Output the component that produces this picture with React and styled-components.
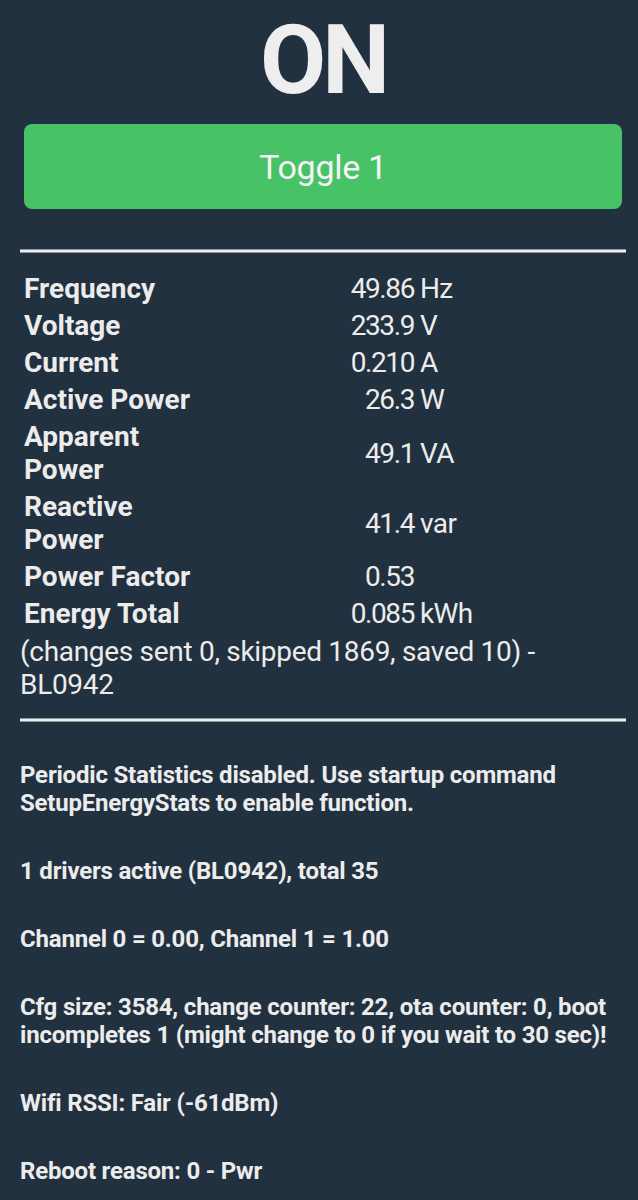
import React from "react";
import styled, { createGlobalStyle } from "styled-components";

const GlobalStyle = createGlobalStyle`
  html, body {
    margin: 0;
    padding: 0;
    background: #22313f;
  }
  body {
    font-family: Roboto, "Noto Sans", "Liberation Sans", sans-serif;
    color: #ececec;
  }
`;

const Page = styled.div`
  min-height: 1200px;
  padding: 4px 12px 0 20px;
  box-sizing: border-box;
  background: #22313f;
`;

const State = styled.div`
  font-size: 96px;
  font-weight: 700;
  letter-spacing: -4px;
  text-align: center;
  color: #eeeeee;
`;

const ToggleButton = styled.button`
  display: flex;
  width: calc(100% - 8px);
  height: 85px;
  margin: 8px 4px 0;
  align-items: center;
  justify-content: center;
  border: none;
  border-radius: 8px;
  background: #47c266;
  color: #f4f4f4;
  font-family: Roboto, "Liberation Sans", sans-serif;
  font-size: 34px;
  font-weight: 400;
  letter-spacing: -0.3px;
  cursor: pointer;
`;

const Rule = styled.hr`
  height: 2px;
  margin: ${(p) => p.$top}px 0 0;
  border: none;
  border-top: 1px solid #8d969e;
  border-bottom: 1px solid #8d969e;
  background: #eeeeee;
`;

const Readings = styled.div`
  display: grid;
  grid-template-columns: 180px 210px auto;
  row-gap: 4px;
  align-items: center;
  margin-top: 19px;
  padding-left: 4px;
`;

const Label = styled.div`
  font-size: 28px;
  font-weight: 700;
  line-height: 33px;
`;

const Value = styled.div`
  font-size: 28px;
  line-height: 33px;
  letter-spacing: -1.4px;
  text-align: right;
`;

const Unit = styled.div`
  font-size: 28px;
  line-height: 33px;
  letter-spacing: -0.6px;
  padding-left: 6px;
`;

const Note = styled.div`
  font-size: 28px;
  line-height: 33px;
  letter-spacing: -0.3px;
  margin-top: 5px;
`;

const Info = styled.p`
  margin: 0 0 40px;
  font-size: 24px;
  font-weight: 700;
  line-height: 28px;
  letter-spacing: -0.2px;
  &:first-of-type {
    margin-top: 39px;
  }
`;

const readings = [
  ["Frequency", "49.86", "Hz"],
  ["Voltage", "233.9", "V"],
  ["Current", "0.210", "A"],
  ["Active Power", "26.3", "W"],
  ["Apparent Power", "49.1", "VA"],
  ["Reactive Power", "41.4", "var"],
  ["Power Factor", "0.53", ""],
  ["Energy Total", "0.085", "kWh"],
];

const info = [
  "Periodic Statistics disabled. Use startup command SetupEnergyStats to enable function.",
  "1 drivers active (BL0942), total 35",
  "Channel 0 = 0.00, Channel 1 = 1.00",
  "Cfg size: 3584, change counter: 22, ota counter: 0, boot incompletes 1 (might change to 0 if you wait to 30 sec)!",
  "Wifi RSSI: Fair (-61dBm)",
  "Reboot reason: 0 - Pwr",
];

const App = () => (
  <Page>
    <GlobalStyle />
    <State>ON</State>
    <ToggleButton>Toggle 1</ToggleButton>
    <Rule $top={40} />
    <Readings>
      {readings.map(([label, value, unit]) => (
        <React.Fragment key={label}>
          <Label>{label}</Label>
          <Value>{value}</Value>
          <Unit>{unit}</Unit>
        </React.Fragment>
      ))}
    </Readings>
    <Note>(changes sent 0, skipped 1869, saved 10) - BL0942</Note>
    <Rule $top={17} />
    {info.map((line) => (
      <Info key={line}>{line}</Info>
    ))}
  </Page>
);

export default App;
